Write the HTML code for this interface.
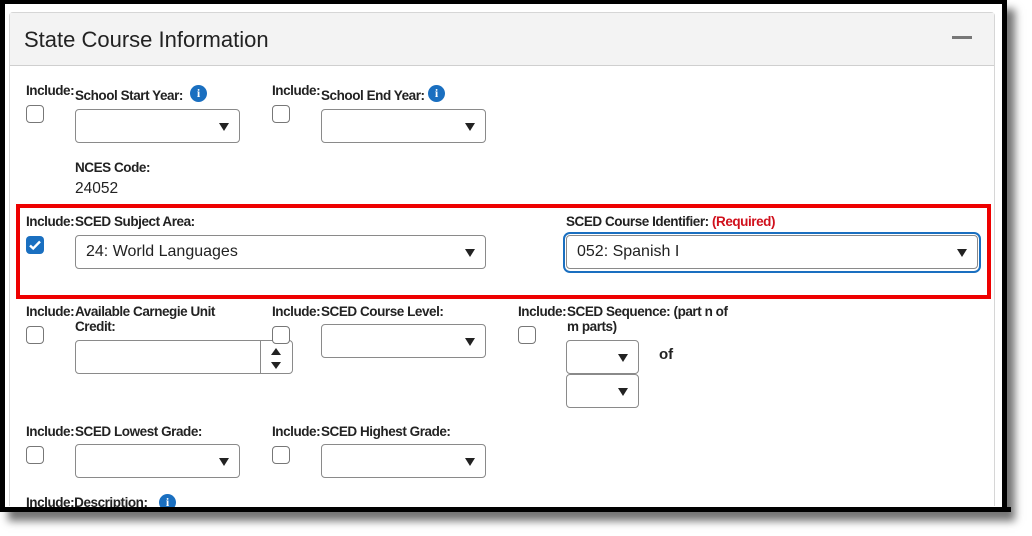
<!DOCTYPE html>
<html><head><meta charset="utf-8"><style>
*{margin:0;padding:0;box-sizing:border-box}
body{width:1032px;height:536px;background:#fff;position:relative;overflow:hidden;font-family:"Liberation Sans",Arial,sans-serif;color:#222}
.a{position:absolute}
.frame{left:0;top:0;width:1007px;height:512px;border:5px solid #000;border-top-width:4px;background:#fff;box-shadow:8px 9px 8px rgba(0,0,0,.55)}
.lbl{position:absolute;font-size:13.5px;font-weight:bold;letter-spacing:-.45px;color:#222;line-height:15px}
.cb{position:absolute;width:18px;height:18px;border:1px solid #777;border-radius:4px;background:#fff}
.sel{position:absolute;border:1px solid #8a8a8a;border-radius:4px;background:#fff;height:34px}
.sel:after{content:"";position:absolute;right:10px;top:13px;border-left:5px solid transparent;border-right:5px solid transparent;border-top:8px solid #222}
.sel span{position:absolute;left:10px;top:7px;font-size:16px;color:#222}
.info{position:absolute;width:17px;height:17px;border-radius:50%;background:#1a6fc0;color:#fff;font-size:12px;font-weight:bold;text-align:center;line-height:17px;font-family:"Liberation Serif",serif}
</style></head><body>
<div class="a frame"></div>
<div class="a" style="left:9px;top:12px;width:986px;height:494px;border:1px solid #d6d6d6;border-bottom:none;border-radius:4px 4px 0 0"></div>
<div class="a" style="left:10px;top:13px;width:984px;height:53px;background:#f3f3f3;border-bottom:1px solid #cfcfcf"></div>
<div class="a" style="left:24px;top:27px;font-size:22px;color:#222">State Course Information</div>
<div class="a" style="left:952px;top:36px;width:20px;height:3px;background:#777"></div>

<div class="lbl" style="left:26px;top:83px">Include:</div>
<div class="cb" style="left:26px;top:105px"></div>
<div class="lbl" style="left:75px;top:88px">School Start Year:</div>
<div class="info" style="left:190px;top:85px">i</div>
<div class="sel" style="left:75px;top:109px;width:165px"></div>
<div class="lbl" style="left:272px;top:83px">Include:</div>
<div class="cb" style="left:272px;top:105px"></div>
<div class="lbl" style="left:321px;top:88px">School End Year:</div>
<div class="info" style="left:428px;top:85px">i</div>
<div class="sel" style="left:321px;top:109px;width:165px"></div>
<div class="lbl" style="left:75px;top:160px">NCES Code:</div>
<div class="a" style="left:75px;top:180px;font-size:15.5px">24052</div>

<div class="a" style="left:16px;top:204px;width:975px;height:95px;border:4px solid #e00"></div>
<div class="lbl" style="left:26px;top:214px">Include:</div>
<div class="lbl" style="left:75px;top:214px">SCED Subject Area:</div>
<div class="a" style="left:26px;top:236px;width:18px;height:18px;border-radius:4px;background:#1a6fc0">
<svg width="18" height="18" viewBox="0 0 18 18"><path d="M4 9.5l3.2 3L14 5.5" stroke="#fff" stroke-width="2.4" fill="none"/></svg></div>
<div class="sel" style="left:75px;top:235px;width:411px"><span>24: World Languages</span></div>
<div class="lbl" style="left:566px;top:214px">SCED Course Identifier: <span style="color:#d0101c">(Required)</span></div>
<div class="a" style="left:563px;top:232px;width:418px;height:41px;border:2px solid #1a6fc0;border-radius:7px"></div>
<div class="sel" style="left:566px;top:235px;width:412px"><span>052: Spanish I</span></div>

<div class="lbl" style="left:26px;top:304px">Include:</div>
<div class="lbl" style="left:75px;top:304px;width:160px">Available Carnegie Unit Credit:</div>
<div class="cb" style="left:26px;top:326px"></div>
<div class="a" style="left:75px;top:340px;width:218px;height:34px;border:1px solid #8a8a8a;border-radius:4px"></div>
<div class="a" style="left:260px;top:341px;width:1px;height:32px;background:#8a8a8a"></div>
<div class="a" style="left:271px;top:348px;border-left:5px solid transparent;border-right:5px solid transparent;border-bottom:7px solid #222"></div>
<div class="a" style="left:271px;top:362px;border-left:5px solid transparent;border-right:5px solid transparent;border-top:7px solid #222"></div>
<div class="lbl" style="left:272px;top:304px">Include:</div>
<div class="lbl" style="left:321px;top:304px">SCED Course Level:</div>
<div class="cb" style="left:272px;top:326px"></div>
<div class="sel" style="left:321px;top:324px;width:165px"></div>
<div class="lbl" style="left:518px;top:304px">Include:</div>
<div class="lbl" style="left:567px;top:304px;width:168px">SCED Sequence: (part n of m parts)</div>
<div class="cb" style="left:518px;top:326px"></div>
<div class="sel" style="left:566px;top:340px;width:73px"></div>
<div class="sel" style="left:566px;top:374px;width:73px"></div>
<div class="a" style="left:659px;top:346px;font-size:15px;font-weight:bold">of</div>

<div class="lbl" style="left:26px;top:424px">Include:</div>
<div class="lbl" style="left:75px;top:424px">SCED Lowest Grade:</div>
<div class="cb" style="left:26px;top:446px"></div>
<div class="sel" style="left:75px;top:444px;width:165px"></div>
<div class="lbl" style="left:272px;top:424px">Include:</div>
<div class="lbl" style="left:321px;top:424px">SCED Highest Grade:</div>
<div class="cb" style="left:272px;top:446px"></div>
<div class="sel" style="left:321px;top:444px;width:165px"></div>
<div class="lbl" style="left:26px;top:495px">Include:Description:</div>
<div class="info" style="left:159px;top:494px">i</div>
<div class="a" style="left:0;top:507px;width:1011px;height:5px;background:#000"></div>
</body></html>
